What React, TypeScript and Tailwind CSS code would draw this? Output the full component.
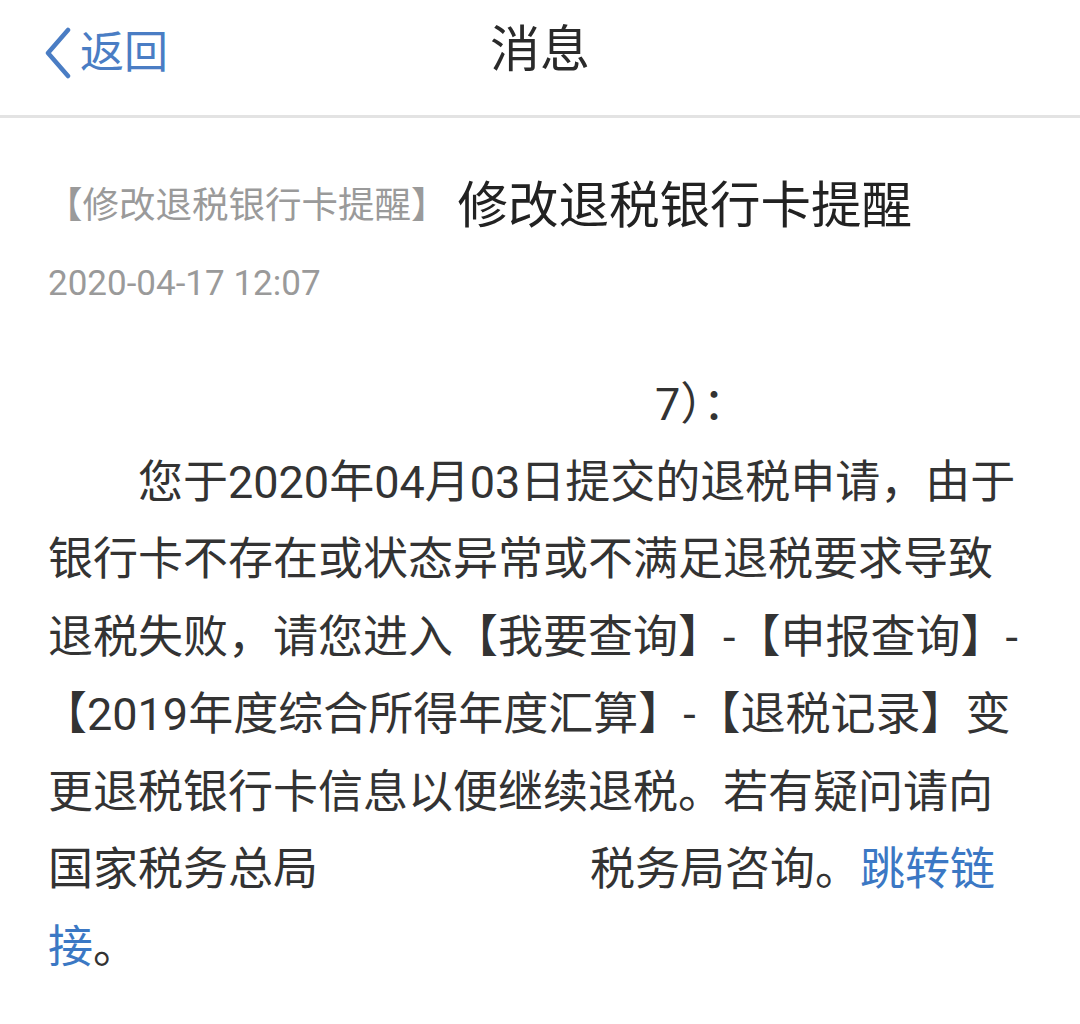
import React from 'react';

const cjk = "font-['Roboto','Noto_Sans_CJK_SC',sans-serif]";

// One line of the message body, kept on its own row so wrapping matches the screenshot
const Line: React.FC<{ children: React.ReactNode; className?: string }> = ({ children, className = '' }) => (
  <div className={`h-[77.5px] leading-[77.5px] whitespace-nowrap ${className}`}>{children}</div>
);

const App: React.FC = () => {
  return (
    <div className={`w-[1080px] h-[1024px] bg-white overflow-hidden ${cjk}`}>
      {/* Header */}
      <div className="relative h-[118px] flex items-center justify-center border-b-[3px] border-[#e3e3e3]">
        <button className="absolute left-[42px] top-[27px] flex items-center text-[#4a7dc4]">
          <svg width="30" height="52" viewBox="0 0 30 52" className="mr-[8px]">
            <path d="M26 3 L6 26 L26 49" fill="none" stroke="#4a7dc4" strokeWidth="4.5" strokeLinecap="round" strokeLinejoin="round" />
          </svg>
          <span className="text-[44px] leading-none">返回</span>
        </button>
        <h1 className="text-[50px] leading-none text-[#2a2a2a] mb-[16px]">消息</h1>
      </div>

      {/* Title */}
      <div className="px-[48px]">
        <div className="flex items-center mt-[57px] h-[62px]">
          <span className="text-[36.5px] text-[#9a9a9a] -ml-[2px]">【修改退税银行卡提醒】</span>
          <span className="text-[50.5px] text-[#222] ml-[10px]">修改退税银行卡提醒</span>
        </div>
        <div className="mt-[29px] text-[35px] leading-none text-[#9a9a9a]">2020-04-17 12:07</div>

        {/* Body */}
        <div className="mt-[65px] text-[45px] text-[#333]">
          <Line className="pl-[607px]">7）：</Line>
          <Line className="pl-[90px]">您于2020年04月03日提交的退税申请，由于</Line>
          <Line>银行卡不存在或状态异常或不满足退税要求导致</Line>
          <Line>退税失败，请您进入【我要查询】-【申报查询】-</Line>
          <Line className="-ml-[6px]">【2019年度综合所得年度汇算】-【退税记录】变</Line>
          <Line>更退税银行卡信息以便继续退税。若有疑问请向</Line>
          <Line>
            国家税务总局<span className="inline-block w-[272px]" />税务局咨询。<span className="text-[#3b78c4]">跳转链</span>
          </Line>
          <Line>
            <span className="text-[#3b78c4]">接</span>。
          </Line>
        </div>
      </div>
    </div>
  );
};

export default App;
